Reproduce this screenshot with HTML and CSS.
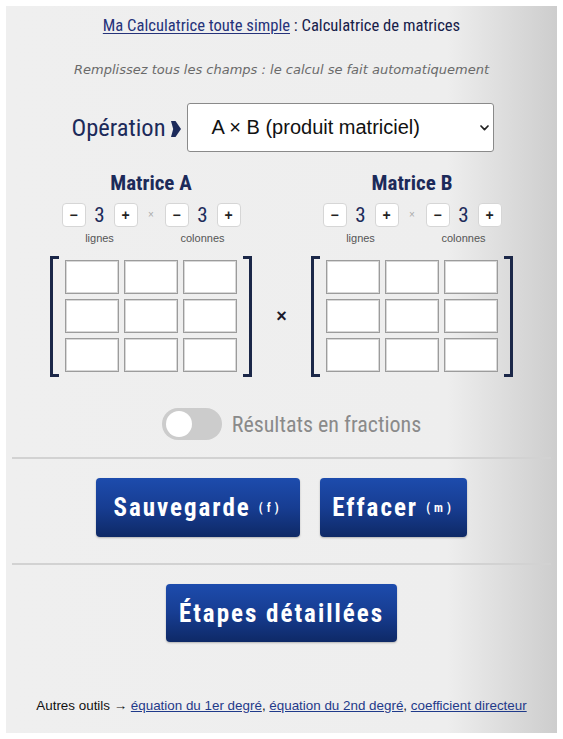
FILE: index.html
```html
<!DOCTYPE html>
<html lang="fr">
<head>
<meta charset="utf-8">
<title>Calculatrice de matrices</title>
<link rel="stylesheet" href="styles.css">
</head>
<body>
<div class="panel">
  <p class="title"><a href="#" class="title-link">Ma Calculatrice toute simple</a> : Calculatrice de matrices</p>
  <p class="hint">Remplissez tous les champs : le calcul se fait automatiquement</p>

  <div class="op-row">
    <span class="op-label">Opération</span>
    <svg class="op-arrow" width="10" height="16" viewBox="0 0 10 16"><polygon points="0,0 4.5,0 10,8 4.5,16 0,16 2.2,8" fill="#1c2a5a"/></svg>
    <div class="select">
      <span class="select-text">A × B (produit matriciel)</span>
      <svg class="select-chev" width="9" height="6" viewBox="0 0 9 6"><path d="M1 1 L4.5 4.6 L8 1" fill="none" stroke="#222" stroke-width="1.7" stroke-linecap="round" stroke-linejoin="round"/></svg>
    </div>
  </div>

  <div class="matrices">
    <div class="matrix-block">
      <div class="m-title">Matrice A</div>
      <div class="controls">
        <div class="ctrl-group">
          <div class="ctrl-row"><span class="step">−</span><span class="num">3</span><span class="step">+</span></div>
          <div class="ctrl-label">lignes</div>
        </div>
        <span class="ctrl-x">×</span>
        <div class="ctrl-group">
          <div class="ctrl-row"><span class="step">−</span><span class="num">3</span><span class="step">+</span></div>
          <div class="ctrl-label">colonnes</div>
        </div>
      </div>
      <div class="grid-wrap">
        <span class="br br-left"></span>
        <div class="grid">
          <span class="cell"></span><span class="cell"></span><span class="cell"></span>
          <span class="cell"></span><span class="cell"></span><span class="cell"></span>
          <span class="cell"></span><span class="cell"></span><span class="cell"></span>
        </div>
        <span class="br br-right"></span>
      </div>
    </div>

    <div class="times">×</div>

    <div class="matrix-block">
      <div class="m-title">Matrice B</div>
      <div class="controls">
        <div class="ctrl-group">
          <div class="ctrl-row"><span class="step">−</span><span class="num">3</span><span class="step">+</span></div>
          <div class="ctrl-label">lignes</div>
        </div>
        <span class="ctrl-x">×</span>
        <div class="ctrl-group">
          <div class="ctrl-row"><span class="step">−</span><span class="num">3</span><span class="step">+</span></div>
          <div class="ctrl-label">colonnes</div>
        </div>
      </div>
      <div class="grid-wrap">
        <span class="br br-left"></span>
        <div class="grid">
          <span class="cell"></span><span class="cell"></span><span class="cell"></span>
          <span class="cell"></span><span class="cell"></span><span class="cell"></span>
          <span class="cell"></span><span class="cell"></span><span class="cell"></span>
        </div>
        <span class="br br-right"></span>
      </div>
    </div>
  </div>

  <div class="toggle-row">
    <span class="toggle"><span class="knob"></span></span>
    <span class="toggle-label">Résultats en fractions</span>
  </div>

  <div class="divider"></div>

  <div class="btn-row">
    <button class="btn btn-save">Sauvegarde<span class="key">(f)</span></button>
    <button class="btn btn-clear">Effacer<span class="key">(m)</span></button>
  </div>

  <div class="divider divider-2"></div>

  <div class="btn-row">
    <button class="btn btn-steps">Étapes détaillées</button>
  </div>

  <p class="footer">Autres outils → <a href="#">équation du 1er degré</a>, <a href="#">équation du 2nd degré</a>, <a href="#">coefficient directeur</a></p>
</div>
</body>
</html>
```
FILE: styles.css
```css
html, body {
  margin: 0;
  padding: 0;
  background: #ffffff;
}

.panel {
  margin: 6px;
  height: 727px;
  box-sizing: border-box;
  padding-top: 10px;
  background: linear-gradient(to right, #efefef 0%, #eeeeee 80%, #cdcdcd 100%);
  font-family: "Roboto Condensed", "DejaVu Sans Condensed", sans-serif;
}

.title {
  margin: 0;
  height: 20px;
  line-height: 20px;
  font-size: 16.6px;
  text-align: center;
  color: #17204a;
}

.title-link {
  color: #26337a;
  text-decoration: underline;
  text-underline-offset: 2px;
}

.hint {
  margin: 26px 0 0;
  line-height: 16px;
  font-family: "DejaVu Sans", "Liberation Sans", sans-serif;
  font-style: italic;
  font-size: 13px;
  color: #6a6a6a;
  text-align: center;
}

.op-row {
  margin-top: 25px;
  height: 49px;
  display: flex;
  align-items: center;
  justify-content: center;
  padding-left: 2px;
}

.op-label {
  font-size: 24.5px;
  color: #1c2a5a;
  margin-right: 5px;
}

.op-arrow {
  display: block;
  margin-right: 6px;
  margin-top: 2px;
}

.select {
  width: 307px;
  height: 49px;
  box-sizing: border-box;
  border: 1px solid #8a8a8a;
  border-radius: 3px;
  background: #ffffff;
  display: flex;
  align-items: center;
  padding-left: 24px;
  padding-right: 4px;
}

.select-text {
  flex: 1;
  font-family: "Liberation Sans", "Helvetica", sans-serif;
  font-size: 20px;
  color: #111;
}

.select-chev {
  display: block;
}

.matrices {
  margin-top: 19px;
  display: flex;
  justify-content: center;
  align-items: flex-end;
}

.matrix-block {
  width: 202px;
  display: flex;
  flex-direction: column;
  align-items: center;
}

.m-title {
  line-height: 24px;
  height: 24px;
  font-size: 21px;
  font-weight: bold;
  color: #1c2a5a;
}

.controls {
  margin-top: 8px;
  display: flex;
  align-items: flex-start;
}

.ctrl-group {
  display: flex;
  flex-direction: column;
  align-items: center;
}

.ctrl-row {
  display: flex;
  align-items: center;
  height: 24px;
}

.step {
  width: 24px;
  height: 24px;
  box-sizing: border-box;
  border: 1px solid #d6d6d6;
  border-radius: 4px;
  background: #ffffff;
  display: flex;
  align-items: center;
  justify-content: center;
  font-family: "Liberation Sans", sans-serif;
  font-weight: bold;
  font-size: 14px;
  color: #222;
}

.num {
  width: 28px;
  text-align: center;
  font-size: 21px;
  line-height: 24px;
  color: #1c2a5a;
}

.ctrl-x {
  width: 27px;
  text-align: center;
  line-height: 24px;
  font-family: "Liberation Sans", sans-serif;
  font-size: 10px;
  color: #aaa;
}

.ctrl-label {
  margin-top: 5px;
  line-height: 13px;
  font-family: "Liberation Sans", sans-serif;
  font-size: 11px;
  color: #555;
}

.grid-wrap {
  margin-top: 11px;
  width: 202px;
  height: 121px;
  display: flex;
  justify-content: space-between;
}

.br {
  width: 9px;
  box-sizing: border-box;
  border: 3px solid #1b2748;
}

.br-left { border-right: none; }
.br-right { border-left: none; }

.grid {
  padding-top: 4px;
  display: grid;
  grid-template-columns: repeat(3, 54px);
  grid-template-rows: repeat(3, 34px);
  gap: 5px;
}

.cell {
  box-sizing: border-box;
  background: #ffffff;
  border: 1px solid #9c9c9c;
  box-shadow: inset 0 0 0 1px #d8d8d8;
}

.times {
  width: 59px;
  height: 121px;
  display: flex;
  align-items: center;
  justify-content: center;
  font-family: "Liberation Sans", sans-serif;
  font-weight: bold;
  font-size: 18px;
  color: #1a1a2a;
}

.toggle-row {
  margin-top: 31px;
  height: 32px;
  display: flex;
  align-items: center;
  justify-content: center;
  padding-left: 20px;
}

.toggle {
  width: 60px;
  height: 32px;
  border-radius: 16px;
  background: #cccccc;
  display: flex;
  align-items: center;
  padding-left: 4px;
  box-sizing: border-box;
  margin-right: 10px;
}

.knob {
  width: 26px;
  height: 26px;
  border-radius: 50%;
  background: #ffffff;
}

.toggle-label {
  font-size: 22px;
  color: #8a8a8a;
}

.divider {
  margin: 17px 6px 0;
  height: 2px;
  background: #d2d2d2;
}

.divider-2 {
  margin-top: 26px;
}

.btn-row {
  margin-top: 19px;
  display: flex;
  justify-content: center;
  gap: 20px;
}

.btn {
  height: 59px;
  border: none;
  border-radius: 4px;
  background: linear-gradient(to bottom, #1d4cad 0%, #173d92 50%, #0e2966 100%);
  box-shadow: 0 1px 2px rgba(0,0,0,0.25);
  color: #ffffff;
  font-family: "Roboto Condensed", "DejaVu Sans Condensed", sans-serif;
  font-weight: bold;
  font-size: 25px;
  letter-spacing: 2px;
  padding: 0;
  display: flex;
  align-items: center;
  justify-content: center;
}

.btn-save { width: 204px; }
.btn-clear { width: 147px; }
.btn-steps { width: 231px; height: 58px; }

.key {
  font-size: 12px;
  letter-spacing: 4px;
  margin-left: 8px;
}

.footer {
  margin: 56px 0 0;
  line-height: 16px;
  font-family: "Liberation Sans", Arial, sans-serif;
  font-size: 13.4px;
  color: #111;
  text-align: center;
}

.footer a {
  color: #1f3a8a;
  text-decoration: underline;
}
```
